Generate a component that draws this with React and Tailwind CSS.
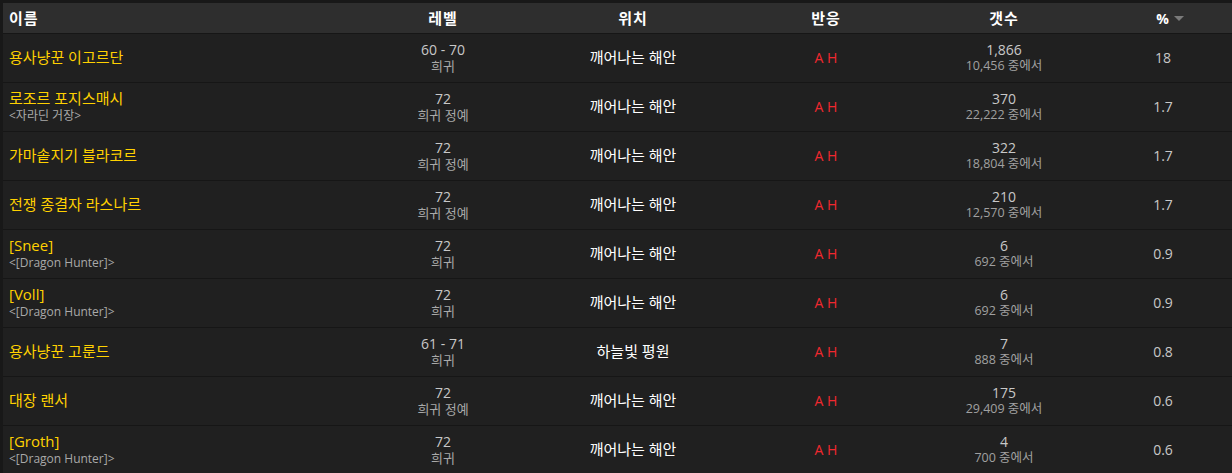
import React from "react";

const rows = [
  { name: "용사냥꾼 이고르단", sub: null, level: "60 - 70", cls: "희귀", loc: "깨어나는 해안", count: "1,866", total: "10,456", pct: "18" },
  { name: "로조르 포지스매시", sub: "<자라딘 거장>", level: "72", cls: "희귀 정예", loc: "깨어나는 해안", count: "370", total: "22,222", pct: "1.7" },
  { name: "가마솥지기 블라코르", sub: null, level: "72", cls: "희귀 정예", loc: "깨어나는 해안", count: "322", total: "18,804", pct: "1.7" },
  { name: "전쟁 종결자 라스나르", sub: null, level: "72", cls: "희귀 정예", loc: "깨어나는 해안", count: "210", total: "12,570", pct: "1.7" },
  { name: "[Snee]", sub: "<[Dragon Hunter]>", level: "72", cls: "희귀", loc: "깨어나는 해안", count: "6", total: "692", pct: "0.9" },
  { name: "[Voll]", sub: "<[Dragon Hunter]>", level: "72", cls: "희귀", loc: "깨어나는 해안", count: "6", total: "692", pct: "0.9" },
  { name: "용사냥꾼 고룬드", sub: null, level: "61 - 71", cls: "희귀", loc: "하늘빛 평원", count: "7", total: "888", pct: "0.8" },
  { name: "대장 랜서", sub: null, level: "72", cls: "희귀 정예", loc: "깨어나는 해안", count: "175", total: "29,409", pct: "0.6" },
  { name: "[Groth]", sub: "<[Dragon Hunter]>", level: "72", cls: "희귀", loc: "깨어나는 해안", count: "4", total: "700", pct: "0.6" },
];

const App = () => {
  return (
    <div
      className="w-[1232px] h-[473px] overflow-hidden bg-[#181818] pt-[3px] pl-[3px]"
      style={{ fontFamily: '"Open Sans", "Noto Sans CJK KR", sans-serif' }}
    >
      <table className="w-[1229px] table-fixed border-collapse bg-[#202020] text-[14px]">
        <colgroup>
          <col className="w-[375px]" />
          <col className="w-[130px]" />
          <col className="w-[250px]" />
          <col className="w-[136px]" />
          <col className="w-[220px]" />
          <col />
        </colgroup>
        <thead>
          <tr className="h-[30px] bg-[#2e2e2e] border-b border-[#161616] text-white text-[15px] tracking-[1px]">
            <th className="text-left pl-[6px] font-bold">이름</th>
            <th className="font-bold">레벨</th>
            <th className="font-bold">위치</th>
            <th className="font-bold">반응</th>
            <th className="font-bold">갯수</th>
            <th className="font-bold pr-[20px] tracking-normal">
              <span className="inline-flex items-center gap-[5px] pl-[14px] text-[14px]">
                %
                <span className="w-0 h-0 border-l-[5px] border-r-[5px] border-t-[5px] border-l-transparent border-r-transparent border-t-[#7a7a7a]" />
              </span>
            </th>
          </tr>
        </thead>
        <tbody>
          {rows.map((r, i) => (
            <tr key={i} className="h-[49px] border-b border-[#161616]">
              <td className="pl-[6px] leading-[19px]">
                <div className="text-[#ffd100] text-[15px]">{r.name}</div>
                {r.sub && <div className="text-[#a9a9a9] text-[12px] leading-[16px]">{r.sub}</div>}
              </td>
              <td className="text-center leading-[17px]">
                <div className="text-[#c8c8c8]">{r.level}</div>
                <div className="text-[#a9a9a9] text-[13px] leading-[16px]">{r.cls}</div>
              </td>
              <td className="text-center text-white text-[15px]">{r.loc}</td>
              <td className="text-center text-[#f0282f]">A H</td>
              <td className="text-center leading-[17px]">
                <div className="text-[#c8c8c8]">{r.count}</div>
                <div className="text-[#a0a0a0] text-[12.5px] leading-[16px]">{r.total} 중에서</div>
              </td>
              <td className="text-center text-[#c8c8c8] pr-[20px]">{r.pct}</td>
            </tr>
          ))}
        </tbody>
      </table>
    </div>
  );
};

export default App;
